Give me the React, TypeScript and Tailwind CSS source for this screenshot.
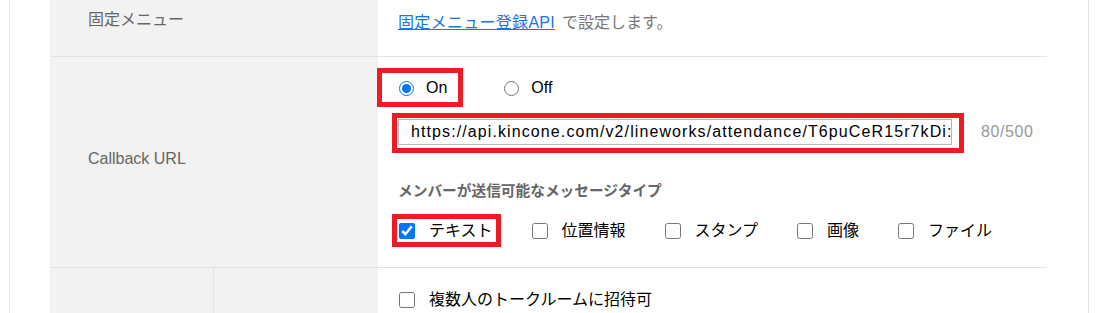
const font = { fontFamily: '"Liberation Sans", "Noto Sans CJK JP", sans-serif' };

const messageTypes = [
  { label: "テキスト", checked: true },
  { label: "位置情報", checked: false },
  { label: "スタンプ", checked: false },
  { label: "画像", checked: false },
  { label: "ファイル", checked: false },
];

function Check({ label, checked }: { label: string; checked: boolean }) {
  return (
    <label className="flex items-center gap-[14px] ml-[1px]">
      <input type="checkbox" defaultChecked={checked} className="m-0 w-4 h-4 accent-[#0075ff]" />
      <span className="text-[16px] leading-6 text-black">{label}</span>
    </label>
  );
}

export default function App() {
  return (
    <div className="w-[1116px] h-[313px] overflow-hidden bg-white" style={font}>
      <div className="ml-[9px] w-[1080px] h-full border-x border-[#e3e3e3] pl-[40px]">
        <div className="w-[997px]">
          {/* 固定メニュー */}
          <div className="flex h-[57px] border-b border-[#e3e3e3]">
            <div className="w-[328px] bg-[#f2f2f2] pl-[38px] pt-[8px] text-[16px] leading-6 text-[#666]">
              固定メニュー
            </div>
            <div className="flex-1 pl-[20px] pt-[11px] text-[16px] leading-6 text-[#777]">
              <a href="#" className="text-[#1a73e8] underline tracking-[0.3px]">
                固定メニュー登録API
              </a>
              <span className="ml-[7px]">で設定します。</span>
            </div>
          </div>

          {/* Callback URL */}
          <div className="flex h-[211px] border-b border-[#e3e3e3]">
            <div className="w-[328px] bg-[#f2f2f2] pl-[38px] pb-[6px] flex items-center text-[16px] text-[#666]">
              Callback URL
            </div>
            <div className="relative flex-1 pl-[20px] pt-[19px]">
              <div className="flex items-center gap-[57px] ml-[1px] text-[16px] leading-6 text-black">
                <label className="flex items-center gap-[12px]">
                  <input type="radio" name="cb" defaultChecked className="m-0 w-[15px] h-[15px] accent-[#0075ff]" />
                  On
                </label>
                <label className="flex items-center gap-[12px]">
                  <input type="radio" name="cb" className="m-0 w-[15px] h-[15px]" />
                  Off
                </label>
              </div>

              <div className="flex items-center mt-[19px]">
                <input
                  readOnly
                  value="https://api.kincone.com/v2/lineworks/attendance/T6puCeR15r7kDi:Xk9"
                  className="w-[554px] h-[26px] border border-[#b8b8b8] pl-[12px] text-[16px] tracking-[1.1px] text-black outline-none"
                  style={font}
                />
                <span className="ml-[29px] text-[16px] tracking-[0.6px] text-[#999]">80/500</span>
              </div>

              <div className="mt-[34px] text-[14.7px] leading-6 font-bold text-[#666]">
                メンバーが送信可能なメッセージタイプ
              </div>

              <div className="flex items-center gap-[38px] mt-[16px]">
                {messageTypes.map((t) => (
                  <Check key={t.label} {...t} />
                ))}
              </div>

              {/* annotations */}
              <div className="absolute left-[-1px] top-[11px] w-[86px] h-[39px] border-[5px] border-[#ed1c24]" />
              <div className="absolute left-[14px] top-[56px] w-[572px] h-[40px] border-[5px] border-[#ed1c24]" />
              <div className="absolute left-[14px] top-[157px] w-[109px] h-[33px] border-[5px] border-[#ed1c24]" />
            </div>
          </div>

          {/* 招待 */}
          <div className="flex h-[60px]">
            <div className="w-[328px] flex">
              <div className="w-[164px] bg-[#f2f2f2] border-r border-[#e3e3e3]" />
              <div className="flex-1 bg-[#f2f2f2]" />
            </div>
            <div className="flex-1 pl-[20px] pt-[20px]">
              <Check label="複数人のトークルームに招待可" checked={false} />
            </div>
          </div>
        </div>
      </div>
    </div>
  );
}
